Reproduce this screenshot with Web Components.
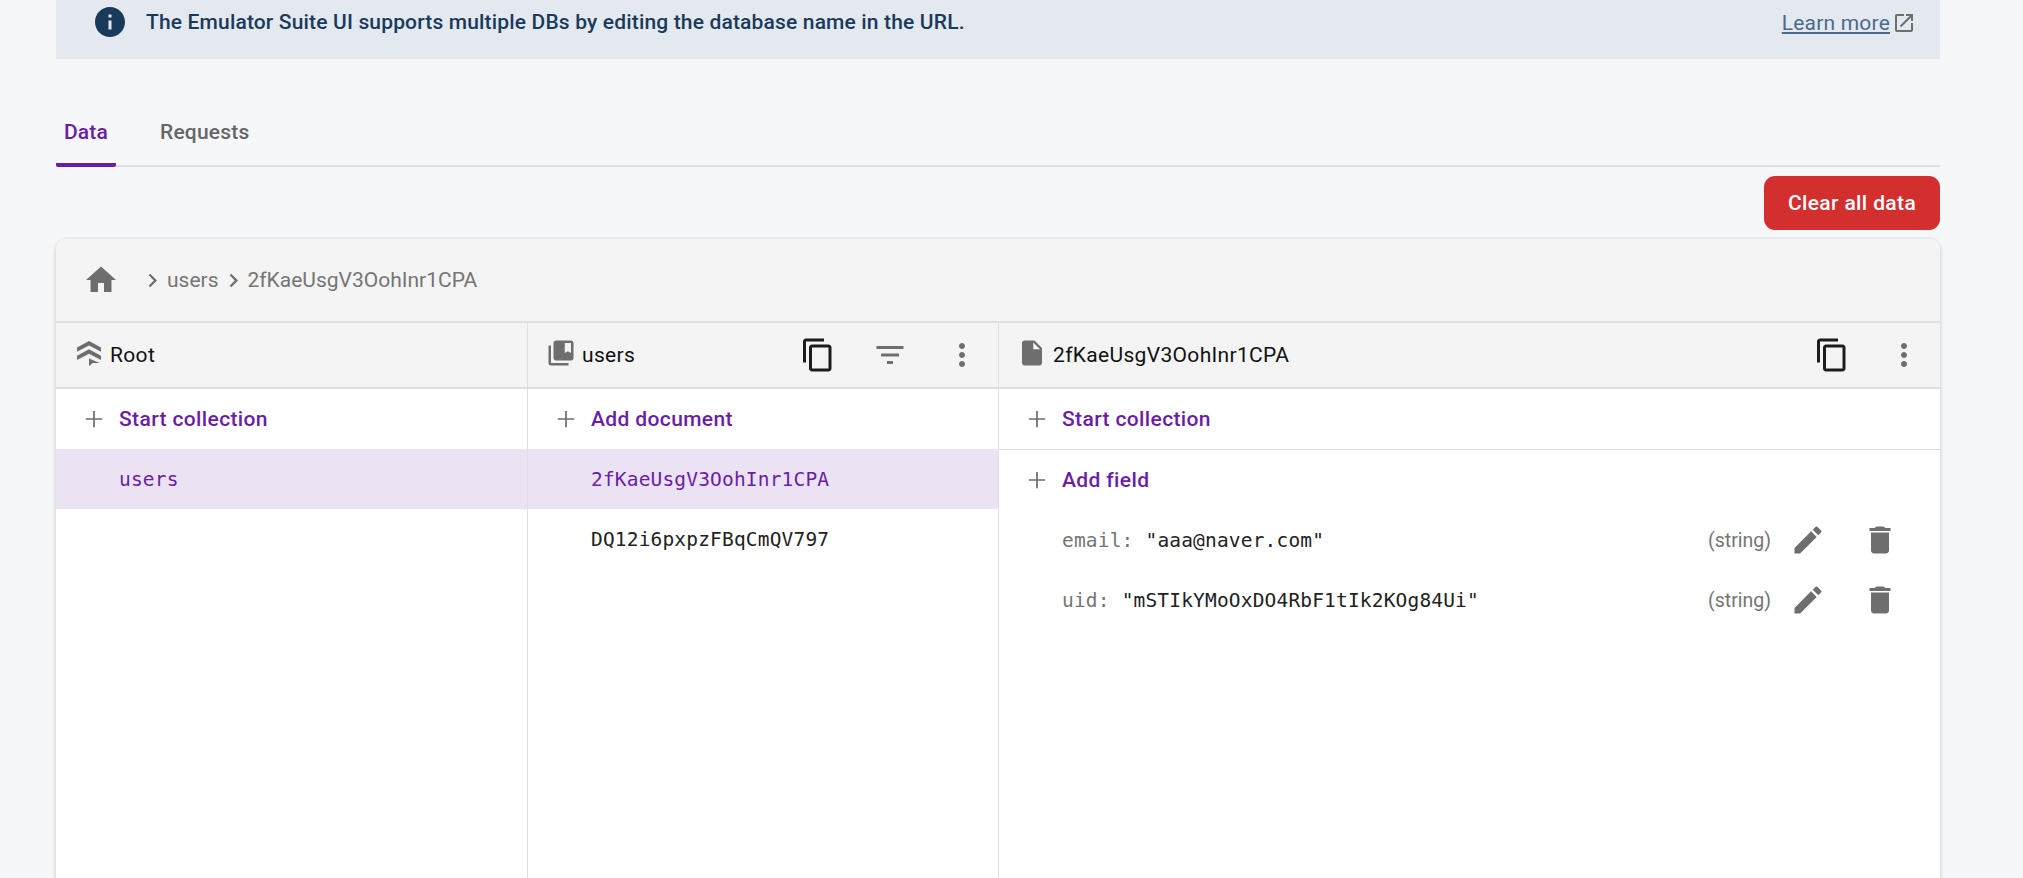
<!DOCTYPE html>
<html>
<head>
<meta charset="utf-8">
<title>Emulator Suite - Firestore</title>
<style>
    html, body { margin: 0; height: 100%; overflow: hidden; }
    body { background: #f6f7f9; font-family: Roboto, "Liberation Sans", sans-serif; }
</style>
</head>
<body>

<fs-page>
    <info-banner>The Emulator Suite UI supports multiple DBs by editing the database name in the URL.</info-banner>
    <tab-bar></tab-bar>
    <clear-button>Clear all data</clear-button>
    <data-card>
        <bread-crumb slot="crumbs"></bread-crumb>

        <panel-column slot="columns" title-text="Root" icon="root" add-label="Start collection">
            <list-row selected>users</list-row>
        </panel-column>

        <panel-column slot="columns" title-text="users" icon="collection" add-label="Add document" actions="copy filter more">
            <list-row selected>2fKaeUsgV3OohInr1CPA</list-row>
            <list-row>DQ12i6pxpzFBqCmQV797</list-row>
        </panel-column>

        <panel-column slot="columns" title-text="2fKaeUsgV3OohInr1CPA" icon="doc" add-label="Start collection" actions="copy more" wide>
            <add-row>Add field</add-row>
            <field-row name="email" value="&quot;aaa@naver.com&quot;" type="(string)"></field-row>
            <field-row name="uid" value="&quot;mSTIkYMoOxDO4RbF1tIk2KOg84Ui&quot;" type="(string)"></field-row>
        </panel-column>
    </data-card>
</fs-page>

<script>
const ICONS = {
    info: '<path d="M12 2C6.48 2 2 6.48 2 12s4.48 10 10 10 10-4.48 10-10S17.52 2 12 2zm1 15h-2v-6h2v6zm0-8h-2V7h2v2z"/>',
    open: '<path d="M19 19H5V5h7V3H5c-1.11 0-2 .9-2 2v14c0 1.1.89 2 2 2h14c1.1 0 2-.9 2-2v-7h-2v7zM14 3v2h3.59l-9.83 9.83 1.41 1.41L19 6.41V10h2V3h-7z"/>',
    home: '<path d="M10 20v-6h4v6h5v-8h3L12 3 2 12h3v8z"/>',
    chevron: '<path d="M10 6L8.59 7.41 13.17 12l-4.58 4.59L10 18l6-6z"/>',
    copy: '<path d="M16 1H4c-1.1 0-2 .9-2 2v14h2V3h12V1zm3 4H8c-1.1 0-2 .9-2 2v14c0 1.1.9 2 2 2h11c1.1 0 2-.9 2-2V7c0-1.1-.9-2-2-2zm0 16H8V7h11v14z"/>',
    filter: '<path d="M10 18h4v-2h-4v2zM3 6v2h18V6H3zm3 7h12v-2H6v2z"/>',
    more: '<path d="M12 8c1.1 0 2-.9 2-2s-.9-2-2-2-2 .9-2 2 .9 2 2 2zm0 2c-1.1 0-2 .9-2 2s.9 2 2 2 2-.9 2-2-.9-2-2-2zm0 6c-1.1 0-2 .9-2 2s.9 2 2 2 2-.9 2-2-.9-2-2-2z"/>',
    edit: '<path d="M3 17.25V21h3.75L17.81 9.94l-3.75-3.75L3 17.25zM20.71 7.04c.39-.39.39-1.02 0-1.41l-2.34-2.34c-.39-.39-1.02-.39-1.41 0l-1.83 1.83 3.75 3.75 1.83-1.83z"/>',
    trash: '<path d="M6 19c0 1.1.9 2 2 2h8c1.1 0 2-.9 2-2V7H6v12zM19 4h-3.5l-1-1h-5l-1 1H5v2h14V4z"/>',
    plus: '<path d="M4.500 11.200h6.700V4.500h1.600v6.700h6.700v1.600h-6.700v6.700h-1.600v-6.700H4.500z"/>',
    root: '<path d="M12 2.400 21.600 7.600v3.400L12 6 2.400 11V7.600zM12 9l9.600 5.200v3.400L12 12.600 2.400 17.600v-3.400zM12 16.400l8.600 3.600h-5.600L12 22.400z"/>',
    collection: '<path d="M4 6H2v14c0 1.1.9 2 2 2h14v-2H4V6zm16-4H8c-1.1 0-2 .9-2 2v12c0 1.1.9 2 2 2h12c1.100 0 2-.9 2-2V4c0-1.100-.9-2-2-2zm0 10l-2.500-1.500L15 12V4h5v8z"/>',
    doc: '<path d="M14 2H6c-1.1 0-2 .9-2 2v16c0 1.1.9 2 2 2h12c1.100 0 2-.9 2-2V8l-6-6zm-1 7V3.500L18.500 9H13z"/>'
};

class MatIcon extends HTMLElement {
    constructor() {
        super();
        this.attachShadow( { mode: 'open' } );
    }
    connectedCallback() {
        const size = this.getAttribute( 'size' ) || 36;
        this.shadowRoot.innerHTML = `
            <style>
                :host { display: inline-flex; flex: none; color: #6e6e6e; width: ${size}px; height: ${size}px; }
                svg { width: 100%; height: 100%; fill: currentColor; fill-rule: evenodd; display: block; }
            </style>
            <svg viewBox="0 0 24 24">${ICONS[ this.getAttribute( 'name' ) ]}</svg>
        `;
    }
}

class FsPage extends HTMLElement {
    constructor() {
        super();
        this.attachShadow( { mode: 'open' } ).innerHTML = `
            <style>
                :host { display: flex; flex-direction: column; height: 878px; padding: 0 83px 0 56px; box-sizing: border-box; overflow: hidden; }
            </style>
            <slot></slot>
        `;
    }
}

class InfoBanner extends HTMLElement {
    constructor() {
        super();
        this.attachShadow( { mode: 'open' } ).innerHTML = `
            <style>
                :host { display: flex; flex: none; align-items: center; height: 44px; padding: 0 24px 15px 36px; background: #e4e9f0; color: #1a3a5c; font-size: 21px; font-weight: 500; letter-spacing: .16px; }
                .msg { flex: 1; margin-left: 18px; }
                a { color: #4a6a90; font-weight: 400; text-decoration: underline; letter-spacing: .2px; }
                .more { display: flex; align-items: center; gap: 2px; padding-top: 2px; }
                mat-icon.i { color: #1a3a5c; }
            </style>
            <mat-icon class="i" name="info"></mat-icon>
            <span class="msg"><slot></slot></span>
            <span class="more"><a>Learn more</a><mat-icon name="open" size="24"></mat-icon></span>
        `;
    }
}

class TabBar extends HTMLElement {
    constructor() {
        super();
        this.attachShadow( { mode: 'open' } ).innerHTML = `
            <style>
                :host { display: flex; flex: none; height: 59px; margin-top: 47px; border-bottom: 2px solid #dfe0e2; font-size: 21px; font-weight: 500; letter-spacing: .2px; color: #666; }
                div { display: flex; align-items: center; height: 61px; margin-bottom: -2px; padding-bottom: 10px; box-sizing: border-box; }
                .on { width: 60px; justify-content: center; color: #6a1ea6; border-bottom: 4px solid #6a1ea6; padding-bottom: 6px; border-radius: 2px; }
                .off { margin-left: 44px; }
            </style>
            <div class="on">Data</div>
            <div class="off">Requests</div>
        `;
    }
}

class ClearButton extends HTMLElement {
    constructor() {
        super();
        this.attachShadow( { mode: 'open' } ).innerHTML = `
            <style>
                :host { display: flex; align-self: flex-end; align-items: center; justify-content: center; flex: none; width: 176px; height: 54px; margin-top: 9px; background: #d32f2f; color: #fff; border-radius: 11px; font-size: 21px; font-weight: 500; letter-spacing: .375px; }
            </style>
            <slot></slot>
        `;
    }
}

class DataCard extends HTMLElement {
    constructor() {
        super();
        this.attachShadow( { mode: 'open' } ).innerHTML = `
            <style>
                :host { display: flex; flex-direction: column; flex: none; height: 700px; margin-top: 9px; background: #fff; border-radius: 10px 10px 0 0; box-shadow: 0 1px 4px rgba(0,0,0,.22); overflow: hidden; }
                .columns { display: grid; grid-template-columns: 472px 471px 1fr; flex: 1; }
            </style>
            <slot name="crumbs"></slot>
            <div class="columns"><slot name="columns"></slot></div>
        `;
    }
}

class BreadCrumb extends HTMLElement {
    constructor() {
        super();
        this.attachShadow( { mode: 'open' } ).innerHTML = `
            <style>
                :host { display: flex; align-items: center; flex: none; height: 82px; padding-left: 27px; background: #f4f4f4; border-bottom: 2px solid #dfdfdf; color: #757575; font-size: 21px; }
                .path { display: flex; align-items: center; margin-left: 19px; }
                mat-icon.c { margin: 0 1px 0 1px; }
            </style>
            <mat-icon name="home"></mat-icon>
            <div class="path">
                <mat-icon class="c" name="chevron" size="27"></mat-icon><span>users</span>
                <mat-icon class="c" name="chevron" size="27"></mat-icon><span>2fKaeUsgV3OohInr1CPA</span>
            </div>
        `;
    }
}

class PanelColumn extends HTMLElement {
    constructor() {
        super();
        this.attachShadow( { mode: 'open' } );
    }
    connectedCallback() {
        const actions = ( this.getAttribute( 'actions' ) || '' ).split( ' ' ).filter( Boolean );
        const buttons = actions.map( name => `<mat-icon class="${name}" name="${name}"></mat-icon>` ).join( '' );
        this.shadowRoot.innerHTML = `
            <style>
                :host { display: flex; flex-direction: column; border-right: 1px solid #e0e0e0; min-width: 0; }
                :host([wide]) { border-right: 0; }
                header { display: flex; align-items: center; height: 64px; flex: none; padding: 0 18px; background: #f4f4f4; border-bottom: 2px solid #dfdfdf; font-size: 21px; letter-spacing: .33px; color: #111; }
                .ico { margin: 0 6px 4px 0; }
                .title { flex: 1; }
                .actions { display: flex; align-items: center; gap: 36px; }
                .copy { color: #1c1c1c; }
            </style>
            <header>
                <mat-icon class="ico" name="${this.getAttribute( 'icon' )}" size="30"></mat-icon>
                <span class="title">${this.getAttribute( 'title-text' )}</span>
                <div class="actions">${buttons}</div>
            </header>
            <add-row${this.hasAttribute( 'wide' ) ? ' ruled' : ''}>${this.getAttribute( 'add-label' )}</add-row>
            <slot></slot>
        `;
    }
}

class AddRow extends HTMLElement {
    constructor() {
        super();
        this.attachShadow( { mode: 'open' } ).innerHTML = `
            <style>
                :host { display: flex; align-items: center; height: 60px; box-sizing: border-box; padding-left: 25px; color: #6a1ea6; font-size: 21px; font-weight: 500; letter-spacing: .375px; }
                :host([ruled]) { height: 61px; border-bottom: 1px solid #e0e0e0; }
                mat-icon { margin-right: 12px; }
            </style>
            <mat-icon name="plus" size="26"></mat-icon>
            <slot></slot>
        `;
    }
}

class ListRow extends HTMLElement {
    constructor() {
        super();
        this.attachShadow( { mode: 'open' } ).innerHTML = `
            <style>
                :host { display: flex; align-items: center; height: 60px; padding-left: 63px; color: #222; font-family: "DejaVu Sans Mono", "Liberation Mono", monospace; font-size: 19.5px; letter-spacing: .17px; }
                :host([selected]) { background: #ebe3f3; color: #6a1ea6; }
            </style>
            <slot></slot>
        `;
    }
}

class FieldRow extends HTMLElement {
    constructor() {
        super();
        this.attachShadow( { mode: 'open' } );
    }
    connectedCallback() {
        this.shadowRoot.innerHTML = `
            <style>
                :host { display: flex; align-items: center; height: 60px; padding-left: 63px; padding-right: 42px; font-family: "DejaVu Sans Mono", "Liberation Mono", monospace; font-size: 19.5px; letter-spacing: .17px; color: #222; }
                .name { color: #757575; margin-right: 12px; }
                .val { flex: 1; }
                .type { font-family: Roboto, sans-serif; letter-spacing: 0; color: #757575; margin-right: 19px; }
                .act { display: flex; gap: 36px; }
            </style>
            <span class="name">${this.getAttribute( 'name' )}:</span>
            <span class="val">${this.getAttribute( 'value' ).replace( /"/g, '&quot;' )}</span>
            <span class="type">${this.getAttribute( 'type' )}</span>
            <div class="act"><mat-icon name="edit"></mat-icon><mat-icon name="trash"></mat-icon></div>
        `;
    }
}

customElements.define( 'mat-icon', MatIcon );
customElements.define( 'fs-page', FsPage );
customElements.define( 'info-banner', InfoBanner );
customElements.define( 'tab-bar', TabBar );
customElements.define( 'clear-button', ClearButton );
customElements.define( 'data-card', DataCard );
customElements.define( 'bread-crumb', BreadCrumb );
customElements.define( 'panel-column', PanelColumn );
customElements.define( 'add-row', AddRow );
customElements.define( 'list-row', ListRow );
customElements.define( 'field-row', FieldRow );
</script>
</body>
</html>
